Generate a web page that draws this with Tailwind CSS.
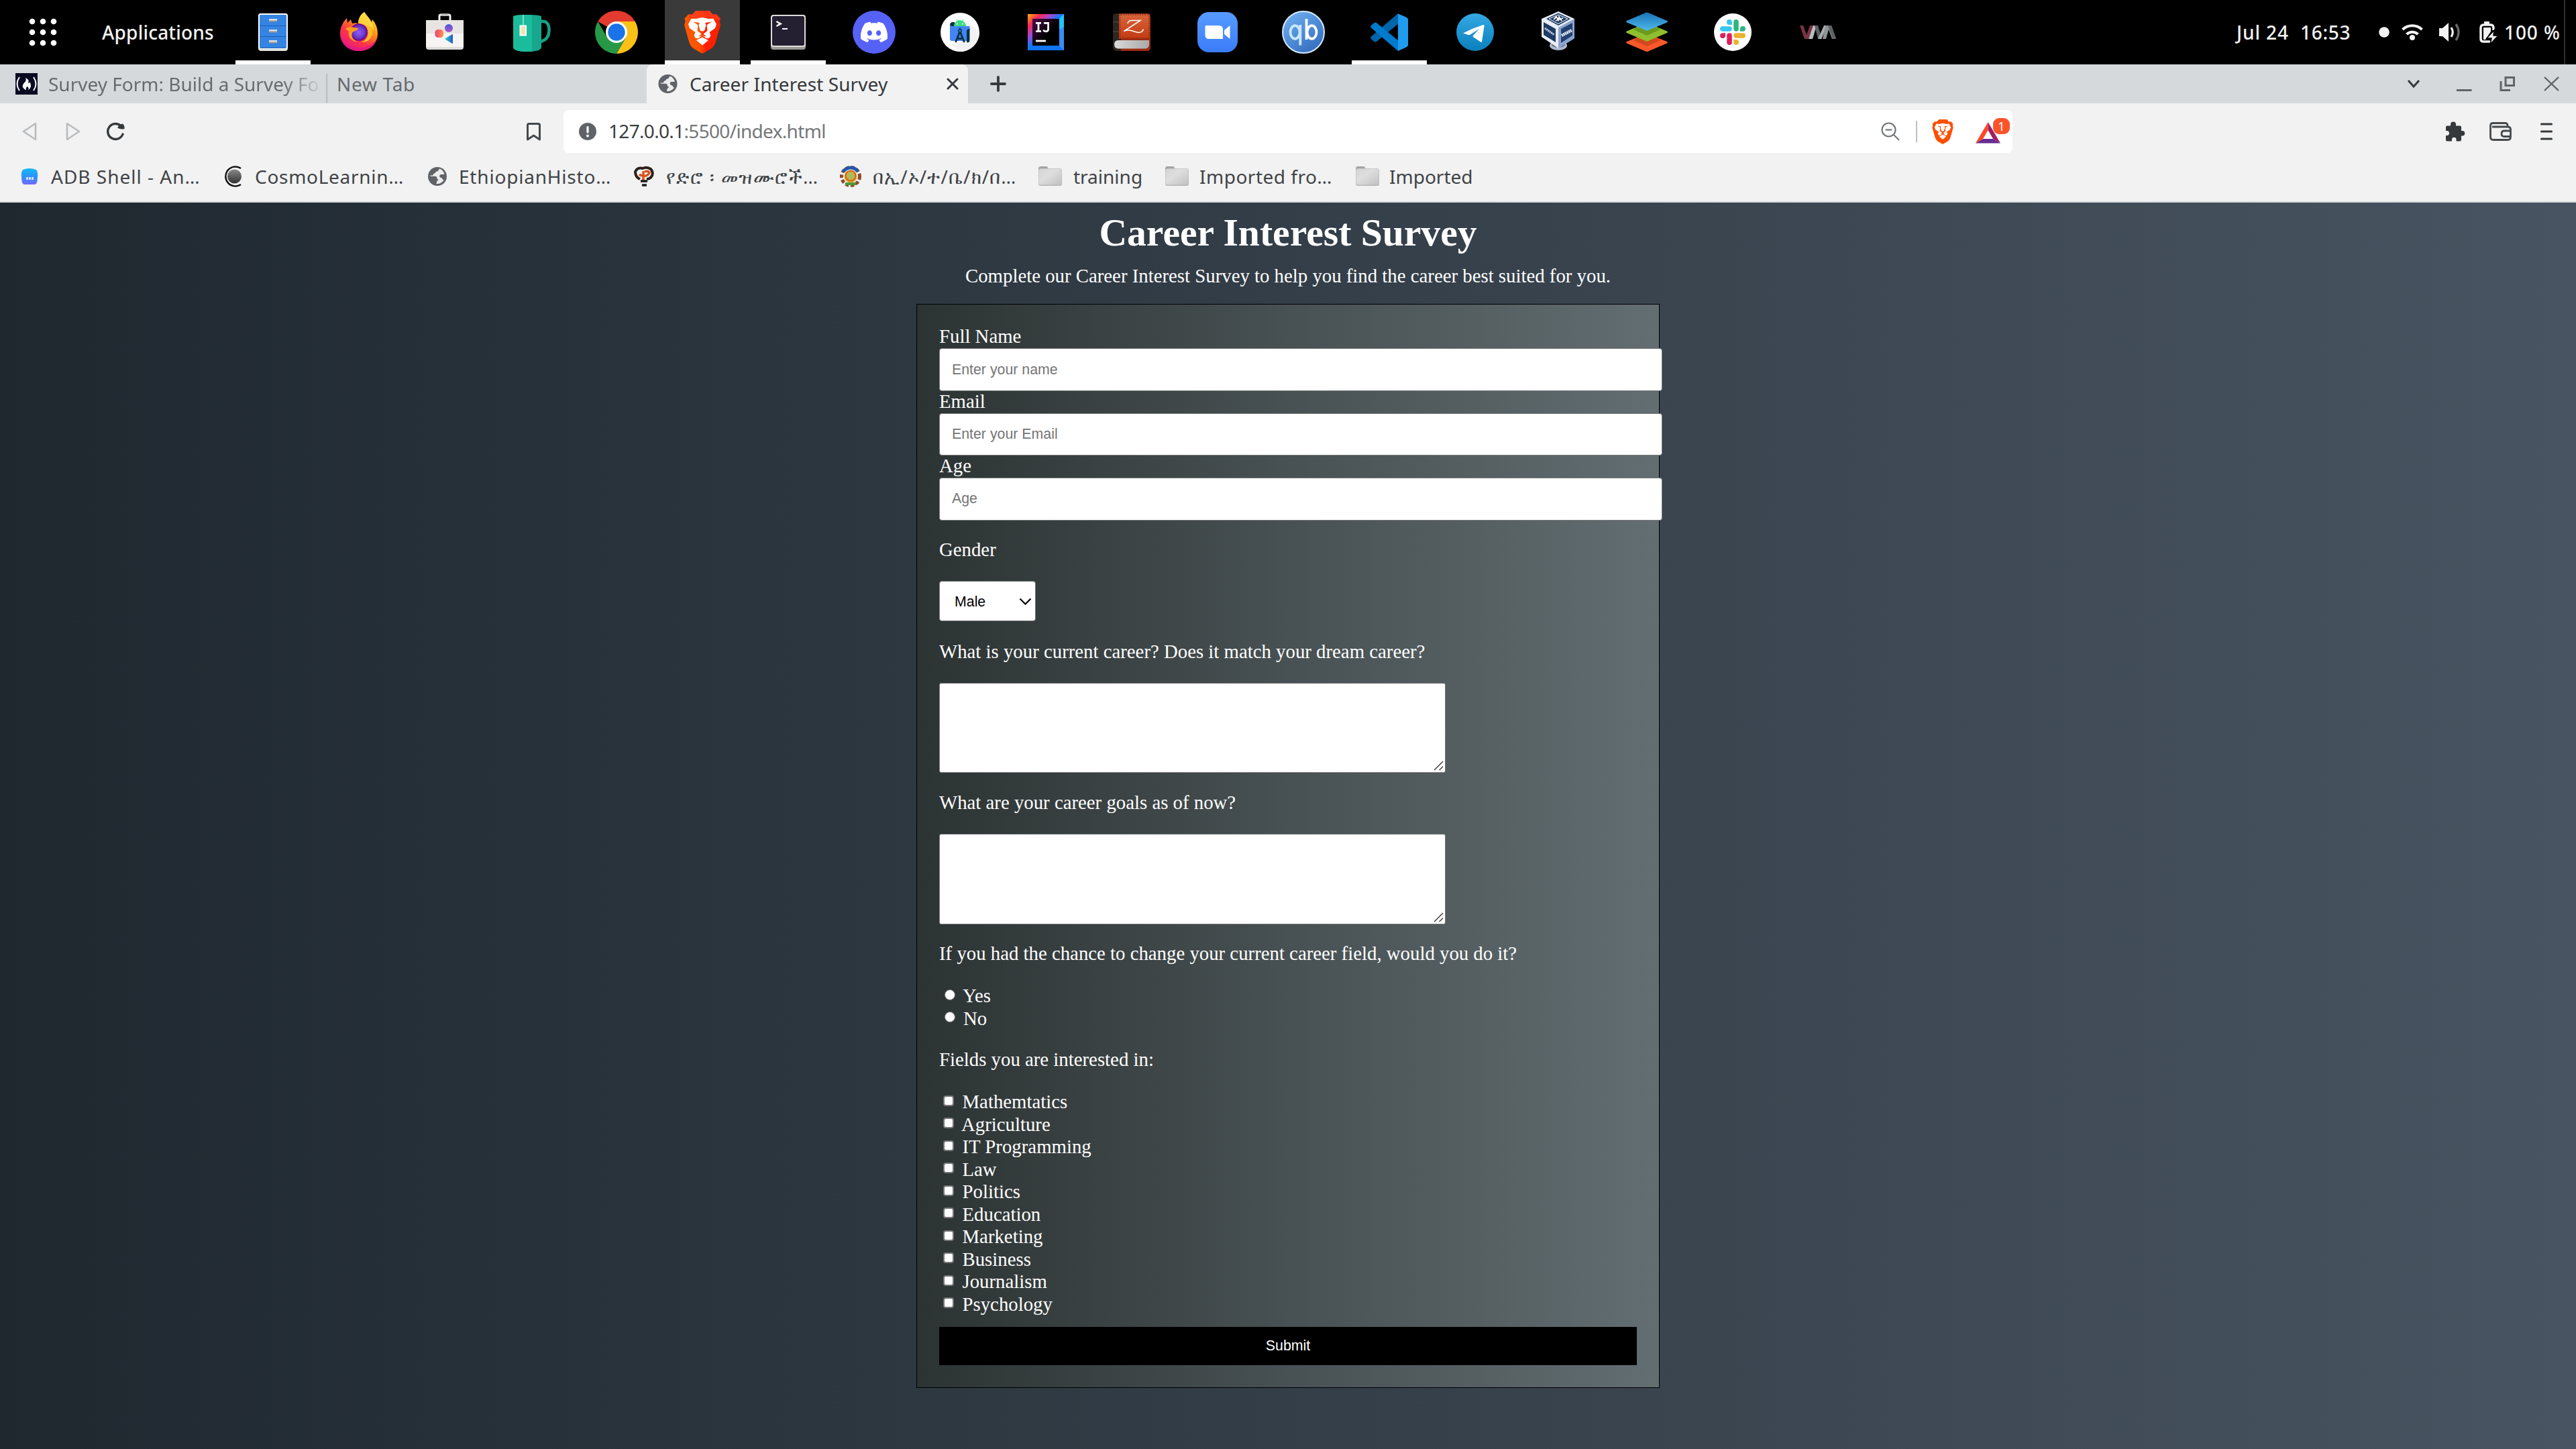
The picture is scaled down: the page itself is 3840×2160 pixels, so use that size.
<!DOCTYPE html>
<html lang="en">
<head>
<meta charset="utf-8">
<title>Career Interest Survey</title>
<script src="https://cdn.jsdelivr.net/npm/@tailwindcss/browser@4"></script>
</head>
<body class="w-[3840px] h-[2160px] overflow-hidden flex flex-col font-['Noto_Sans',sans-serif] text-[28px] leading-[38px] bg-[#f2f2f2]">

<!-- shared gradients -->
<svg class="absolute size-0">
  <defs>
    <linearGradient id="braveG" x1="0" x2="1"><stop offset="0" stop-color="#ff5500"/><stop offset=".4" stop-color="#ff5500"/><stop offset=".6" stop-color="#ff2000"/><stop offset="1" stop-color="#ff2000"/></linearGradient>
    <linearGradient id="ffG" x1=".9" y1="0" x2=".2" y2="1"><stop offset="0" stop-color="#fff44f"/><stop offset=".35" stop-color="#ff980e"/><stop offset=".65" stop-color="#ff3647"/><stop offset="1" stop-color="#e31587"/></linearGradient>
    <radialGradient id="ffP"><stop offset="0" stop-color="#9059ff"/><stop offset=".6" stop-color="#6b3fc9"/><stop offset="1" stop-color="#6e008b"/></radialGradient>
    <linearGradient id="ijG" x1="0" y1="0" x2="1" y2="1"><stop offset="0" stop-color="#fdb60d"/><stop offset=".18" stop-color="#fe2857"/><stop offset=".34" stop-color="#9a4bd8"/><stop offset=".48" stop-color="#087cfa"/><stop offset=".8" stop-color="#18a0fb"/><stop offset="1" stop-color="#8a5cf6"/></linearGradient>
    <linearGradient id="ijI" x1="0" y1="0" x2="1" y2="1"><stop offset="0" stop-color="#4a0a4a"/><stop offset=".6" stop-color="#000"/></linearGradient>
    <linearGradient id="zG" x1="0" y1="0" x2="0" y2="1"><stop offset="0" stop-color="#d9653b"/><stop offset="1" stop-color="#c23a12"/></linearGradient>
    <linearGradient id="pgG" x1="0" x2="1"><stop offset="0" stop-color="#d9d9d9"/><stop offset="1" stop-color="#a9a9a9"/></linearGradient>
    <linearGradient id="zmG" x1="0" y1="0" x2="0" y2="1"><stop offset="0" stop-color="#569bff"/><stop offset="1" stop-color="#3b7cf8"/></linearGradient>
    <linearGradient id="qbG" x1="0" y1="0" x2=".7" y2="1"><stop offset="0" stop-color="#72b4f5"/><stop offset="1" stop-color="#356ebf"/></linearGradient>
    <linearGradient id="tgG" x1="0" y1="0" x2="0" y2="1"><stop offset="0" stop-color="#34a9e4"/><stop offset="1" stop-color="#0a7fbb"/></linearGradient>
    <linearGradient id="sB" x1="0" y1="0" x2="0" y2="1"><stop offset="0" stop-color="#1a73b8"/><stop offset="1" stop-color="#4eb8ea"/></linearGradient>
    <linearGradient id="adbG" x1="0" y1="0" x2="0" y2="1"><stop offset="0" stop-color="#17b9f5"/><stop offset=".5" stop-color="#2a94fb"/><stop offset="1" stop-color="#7468fb"/></linearGradient>
    <linearGradient id="cosG" x1="0" y1="0" x2="0" y2="1"><stop offset="0" stop-color="#888"/><stop offset="1" stop-color="#333"/></linearGradient>
    <linearGradient id="foG" x1="0" y1="0" x2="1" y2="1"><stop offset="0" stop-color="#d4d4d4"/><stop offset=".4" stop-color="#dedede"/><stop offset="1" stop-color="#c2c2c2"/></linearGradient>
    <g id="lion">
      <path d="M22.3 0H42.7L47.3 5.5L53.3 5.5L59 12.3L57.3 15L59 21.3L52 46Q50 53 45 56.5L32 64L19 56.5Q14 53 12 46L5 21.3L6.700 15L5 12.300L11 5.500L17 5.500Z"/>
      <path fill="#fff" d="M32 10L42 12L48 11L53 20L51 26L42.500 32L44.500 37L42 41L37.500 41L32 36.500L26.500 41L22 41L19.500 37L21.500 32L13 26L11 20L16 11L22 12Z"/>
      <path fill="#fff" d="M32 39.500L41 44L32 51.500L23 44Z"/>
      <path d="M18 16.500L28 18L26.500 21L28.500 29L32 31L35.500 29L37.500 21L36 18L46 16.500L39.500 20.500L38.500 22L39.500 30L33.500 34.500L38 38.500L32 37L26 38.500L30.500 34.500L24.500 30L25.500 22L24.500 20.500Z"/>
    </g>
    <g id="globe">
      <circle cx="14" cy="14" r="14" fill="#5f6368"/>
      <path fill="#f2f2f2" d="M17.500 2.500C15.500 3.500 16 6 13.500 6.500C10.500 7 12 9 9.500 9.500C7.500 10 8.500 12 6.500 12.500L3 12.500C3 15 9 13 12 14C14.500 15 12 17 14.500 18C17 19 14 20 13 22L12.500 25C17 25.500 21.500 23 23.500 19.500C21 19 22 16.500 19.500 16C17 15.500 16.500 13 18 11.500C20 10.500 22 11.500 24.500 10.500C23.500 7 21 3.800 17.500 2.500Z" opacity=".95"/>
    </g>
    <g id="folder">
      <path d="M0 4Q0 0 3 0H11Q14 0 14.500 4L15 10H0Z" fill="#a3a3a3"/>
      <rect y="3" width="35" height="26" rx="3.500" fill="#b5b5b5"/>
      <rect x=".5" y="3.500" width="34" height="24" rx="3" fill="url(#foG)"/>
    </g>
  </defs>
</svg>

<!-- desktop panel -->
<div class="h-[96px] shrink-0 bg-black flex items-stretch text-[#f2f2f2] font-medium">
  <div class="w-[151px] pl-[42px] flex items-center">
    <svg width="44" height="44" viewBox="0 0 44 44" fill="#fff"><circle cx="6" cy="6" r="4.300"/><circle cx="22" cy="6" r="4.300"/><circle cx="38" cy="6" r="4.300"/><circle cx="6" cy="22" r="4.300"/><circle cx="22" cy="22" r="4.300"/><circle cx="38" cy="22" r="4.300"/><circle cx="6" cy="38" r="4.300"/><circle cx="22" cy="38" r="4.300"/><circle cx="38" cy="38" r="4.300"/></svg>
  </div>
  <div class="w-[200px] pl-[1px] flex items-center tracking-[0.2px]">Applications</div>

  <div class="flex gap-[16px]">
    <div class="w-[112px] flex items-center justify-center border-b-[6px] border-white pt-[6px]">
      <svg width="64" height="64" viewBox="0 0 64 64"><rect x="10" y="4" width="44" height="56" rx="4" fill="#deddda"/><rect x="10" y="4" width="44" height="53" rx="4" fill="#fff"/><rect x="12" y="6" width="40" height="50" rx="2" fill="#1a5fb4"/><path d="M14 6H50Q52 6 52 8V22H12V8Q12 6 14 6ZM12 23H52V38H12ZM12 39H52V55H12Z" fill="#3584e4"/><g fill="#9a9996"><rect x="26" y="12" width="12" height="4.500"/><rect x="26" y="28" width="12" height="4.500"/><rect x="26" y="44" width="12" height="4.500"/></g><g fill="#deddda"><rect x="26" y="12" width="12" height="2.500"/><rect x="26" y="28" width="12" height="2.500"/><rect x="26" y="44" width="12" height="2.500"/></g></svg>
    </div>
    <div class="w-[112px] flex items-center justify-center">
      <svg width="64" height="64" viewBox="0 0 64 64"><path fill="url(#ffG)" d="M40 2C44 8 48 11 51 17L52 13Q60 22 60 34C60 49 48 60 32 60C16 60 4 49 4 34C4 25 8 17 14 11L15 18L20 13L22 19C25 18 29 18 31 19C31 12 34 6 40 2Z"/><path fill="#e31587" opacity=".75" d="M5 39C9 51 20 55 32 55C44 55 55 50 59 40C57 53 46 60 32 60C18 60 7 52 5 39Z"/><circle cx="32" cy="32" r="13" fill="url(#ffP)"/><path fill="#ff9a1f" d="M12 27C16 22 24 25 31 26C30 31 23 30 22 33C20 39 24 44 30 46C20 46 15 38 17 31Z"/><path fill="#ffbd2e" d="M36 20C42 21 46 26 46 33C46 40 41 45 36 47C46 48 52 40 52 32C52 25 47 19 41 19Z"/><path fill="#ffe04a" d="M40 2C45 9 54 18 54 30C50 20 38 20 31 19C31 12 34 6 40 2Z" opacity=".75"/></svg>
    </div>
    <div class="w-[112px] flex items-center justify-center">
      <svg width="64" height="64" viewBox="0 0 64 64"><defs><linearGradient id="sw1"><stop offset="0" stop-color="#ed3f80"/><stop offset="1" stop-color="#ff9444"/></linearGradient><linearGradient id="sw2" x1="0" y1="0" x2="0" y2="1"><stop offset="0" stop-color="#4b57dc"/><stop offset="1" stop-color="#b154c9"/></linearGradient><linearGradient id="sw3"><stop offset="0" stop-color="#34dab8"/><stop offset="1" stop-color="#1f54d4"/></linearGradient></defs><path d="M24 15V8Q24 6 26 6H38Q40 6 40 8V15" fill="none" stroke="#f6f5f4" stroke-width="3"/><path d="M26 4.500H38L37 8H27Z" fill="#c0bfbc"/><path d="M4 14H60V54Q60 58 56 58H8Q4 58 4 54Z" fill="#deddda"/><path d="M4 14H60V54H4Z" fill="#f6f5f4"/><path d="M4 14H60V34H4Z" fill="#e6e5e1"/><circle cx="38" cy="26" r="6" fill="url(#sw2)"/><rect x="17.500" y="28" width="12.500" height="12" rx="4.500" fill="url(#sw1)"/><path d="M44 36Q44 34.500 42.500 35.500L33 41Q31.500 42 33 43L42.500 48.500Q44 49.500 44 48Z" fill="url(#sw3)"/></svg>
    </div>
    <div class="w-[112px] flex items-center justify-center">
      <svg width="64" height="64" viewBox="0 0 64 64"><path d="M47 16Q60 14 59.500 30Q59 43 47 46" fill="none" stroke="#16a085" stroke-width="4.500"/><path d="M6 9Q6 6 27 6Q48 6 48 9V54Q48 61 27 61Q6 61 6 54Z" fill="#16a78c"/><path d="M6 9Q6 6 27 6L34 6.200V61Q6 62 6 54Z" fill="#1abc9c"/><path d="M21 6V22" stroke="#a8e6da" stroke-width="1.500"/><rect x="15.500" y="21.500" width="10.500" height="16" fill="#fff"/><rect x="17.500" y="23.500" width="6.500" height="12" fill="#ece5b0"/></svg>
    </div>
    <div class="w-[112px] flex items-center justify-center">
      <svg width="64" height="64" viewBox="0 0 64 64"><path d="M32 32L4.290 16A32 32 0 0 1 59.710 16Z" fill="#e33b2e"/><path d="M32 16H59.710A32 32 0 0 1 32 64L45.860 40Z" fill="#fbc116"/><path d="M18.140 40L4.290 16A32 32 0 0 0 32 64L45.860 40Z" fill="#279847"/><path d="M32 16H59.710L45 40Z" fill="#fbc116"/><circle cx="32" cy="32" r="16" fill="#fff"/><circle cx="32" cy="32" r="12.700" fill="#1a73e8"/></svg>
    </div>
    <div class="w-[112px] flex items-center justify-center bg-[#3a3a3a] border-b-[6px] border-white pt-[6px]">
      <svg width="64" height="64" viewBox="0 0 64 64" fill="url(#braveG)"><use href="#lion"/><path d="M22.300 0H42.700L47.300 5.500H53.300L59 12.300L57.300 15L50 12L42 12L32 9.500L22 12L14 12L11 5.500H17Z" fill="#ff3a1c" opacity=".8"/></svg>
    </div>
    <div class="w-[112px] flex items-center justify-center border-b-[6px] border-white pt-[6px]">
      <svg width="64" height="64" viewBox="0 0 64 64"><rect x="6" y="10" width="52" height="48" rx="4" fill="#9a9996"/><rect x="6" y="6" width="52" height="48" rx="4" fill="#deddda"/><rect x="8" y="8" width="48" height="44" rx="2.500" fill="#241f31"/><path d="M14.500 16L20.500 19.500L14.500 23" fill="none" stroke="#fff" stroke-width="2.600"/><path d="M23 27H31" stroke="#fff" stroke-width="2"/></svg>
    </div>
    <div class="w-[112px] flex items-center justify-center">
      <svg width="64" height="64" viewBox="0 0 64 64"><circle cx="32" cy="32" r="32" fill="#5662f6"/><path fill="#fff" transform="translate(12 11.800) scale(1.667)" d="M20.317 4.3698a19.7913 19.7913 0 00-4.8851-1.5152.0741.0741 0 00-.0785.0371c-.211.3753-.4447.8648-.6083 1.2495-1.8447-.2762-3.68-.2762-5.4868 0-.1636-.3933-.4058-.8742-.6177-1.2495a.077.077 0 00-.0785-.037 19.7363 19.7363 0 00-4.8852 1.515.0699.0699 0 00-.0321.0277C.5334 9.0458-.319 13.5799.0992 18.0578a.0824.0824 0 00.0312.0561c2.0528 1.5076 4.0413 2.4228 5.9929 3.0294a.0777.0777 0 00.0842-.0276c.4616-.6304.8731-1.2952 1.226-1.9942a.076.076 0 00-.0416-.1057c-.6528-.2476-1.2743-.5495-1.8722-.8923a.077.077 0 01-.0076-.1277c.1258-.0943.2517-.1923.3718-.2914a.0743.0743 0 01.0776-.0105c3.9278 1.7933 8.18 1.7933 12.0614 0a.0739.0739 0 01.0785.0095c.1202.099.246.1981.3728.2924a.077.077 0 01-.0066.1276 12.2986 12.2986 0 01-1.873.8914.0766.0766 0 00-.0407.1067c.3604.698.7719 1.3628 1.225 1.9932a.076.076 0 00.0842.0286c1.961-.6067 3.9495-1.5219 6.0023-3.0294a.077.077 0 00.0313-.0552c.5004-5.177-.8382-9.6739-3.5485-13.6604a.061.061 0 00-.0312-.0286zM8.02 15.3312c-1.1825 0-2.1569-1.0857-2.1569-2.419 0-1.3332.9555-2.4189 2.157-2.4189 1.2108 0 2.1757 1.0952 2.1568 2.419 0 1.3332-.9555 2.4189-2.1569 2.4189zm7.9748 0c-1.1825 0-2.1569-1.0857-2.1569-2.419 0-1.3332.9554-2.4189 2.1569-2.4189 1.2108 0 2.1757 1.0952 2.1568 2.419 0 1.3332-.946 2.4189-2.1568 2.4189Z"/></svg>
    </div>
    <div class="w-[112px] flex items-center justify-center">
      <svg width="64" height="64" viewBox="0 0 64 64"><circle cx="32" cy="32" r="29" fill="#fff"/><path d="M40 14L61 32A29 29 0 0 1 30 61L20 50L42 45Z" fill="#f3f3f3"/><path d="M17 22Q17 17 21 17H24V24H17Z" fill="#073042"/><path d="M17 21Q18 23 21 23H44V43Q44 45 41 45H20Q17 45 17 42Z" fill="#4285f4"/><path d="M23 23A9 9 0 0 1 41 23Z" fill="#3ddc84"/><path d="M27 13L29 16.500M37 13L35 16.500" stroke="#3ddc84" stroke-width="1"/><g fill="#fff"><circle cx="28" cy="19.500" r="1"/><circle cx="36" cy="19.500" r="1"/></g><path d="M42 23H46.500V30H42Z" fill="#4285f4"/><path d="M42 30Q42 28 44 27.500L46.500 26.500V44Q46.500 47 43.500 47.500Q42 47.500 42 45Z" fill="#073042"/><path d="M31.500 32L25.500 47M32.500 32L38.500 47M28 40.500Q32 43 36 40.500" stroke="#073042" stroke-width="2.800" fill="none"/><circle cx="32" cy="30" r="2.200" fill="#4285f4" stroke="#073042" stroke-width="1.500"/><path d="M32 25V28" stroke="#073042" stroke-width="1.500"/></svg>
    </div>
    <div class="w-[112px] flex items-center justify-center">
      <svg width="64" height="64" viewBox="0 0 64 64"><rect x="5" y="5" width="54" height="54" fill="url(#ijG)"/><path d="M5 59L12 52H52L59 59Z" fill="#1173f0"/><path d="M59 5L52 12V52L59 59Z" fill="#3a8df5"/><path d="M59 5L52 12V28L59 24Z" fill="#20c5ff"/><rect x="12" y="12" width="40" height="40" fill="url(#ijI)"/><g fill="none" stroke="#fff" stroke-width="2.800"><path d="M17 18.300H25M21 18V31M17 30.700H25"/><path d="M29 18.300H35.600V27.500Q35.600 30.800 32 30.800Q30 30.800 28 29"/></g><path d="M17 45H32" stroke="#fff" stroke-width="2.800"/></svg>
    </div>
    <div class="w-[112px] flex items-center justify-center">
      <svg width="64" height="64" viewBox="0 0 64 64"><path d="M10 4H55Q60 4 60 9V55Q60 60 55 60H11Q4 60 4 53V10Q4 4 10 4Z" fill="#9c2a12"/><path d="M9 4H16V60H11Q4 60 4 53V10Q4 4 9 4Z" fill="#2b2722"/><path d="M4 17H13M4 31H13" stroke="#5a5148" stroke-width="1"/><path d="M12 44H58V49Q58 56 53 56.500H12Q6 56 6 50Q6 44.500 12 44Z" fill="url(#pgG)"/><path d="M13 5H55Q59 5 59 9V37Q59 41.500 55 42H13Z" fill="url(#zG)"/><path d="M14.500 6V41M14.500 41H55Q58 40 58 37V9Q58 6 54 6H14.500" stroke="#5a1c08" stroke-width="1" stroke-dasharray="2 1.500" fill="none"/><path d="M26 19Q27 14.500 32 14.500H45L20.500 30.500Q27 27.500 36 31Q47 35 49.500 27.500" stroke="#fff" stroke-width="1.500" fill="none"/></svg>
    </div>
    <div class="w-[112px] flex items-center justify-center">
      <svg width="64" height="64" viewBox="0 0 64 64"><rect x="2" y="2" width="60" height="60" rx="17" fill="url(#zmG)"/><path d="M15 22H34Q40 22 40 28V42H19Q13.500 42 13.500 36V24Q13.500 22 15 22Z" fill="#fff"/><path d="M42 29L50.500 22V42L42 35Z" fill="#fff"/></svg>
    </div>
    <div class="w-[112px] flex items-center justify-center">
      <svg width="64" height="64" viewBox="0 0 64 64"><circle cx="32" cy="32" r="31" fill="url(#qbG)" stroke="#daeaff" stroke-width="2"/><g fill="none" stroke-width="3.800"><g stroke="#c8e8ff"><ellipse cx="19.500" cy="32" rx="7" ry="9.800"/><path d="M27.300 21V51.500"/></g><g stroke="#fff"><ellipse cx="44.500" cy="32" rx="7" ry="9.800"/><path d="M36.500 12V43"/></g></g></svg>
    </div>
    <div class="w-[112px] flex items-center justify-center border-b-[6px] border-white pt-[6px]">
      <svg width="64" height="64" viewBox="0 0 64 64"><path d="M45 4L46 19L13 46Q11 47 9.500 46L4.500 41.500Q3.500 40 5 38.500Z" fill="#0065a9"/><path d="M45 60L46 45L13 18Q11 17 9.500 18L4.500 22.500Q3.500 24 5 25.500Z" fill="#007acc"/><path d="M45 4.500L57 9.500Q60 11 60 13V51Q60 53 57 54.500L45 60Z" fill="#1f9cf0"/></svg>
    </div>
    <div class="w-[112px] flex items-center justify-center">
      <svg width="64" height="64" viewBox="0 0 64 64"><circle cx="32" cy="32" r="28" fill="url(#tgG)"/><path d="M14 33.500Q28 26 44 21Q46 20.500 45.500 23L42 46Q41.500 47.500 40 46.500L29 39Q28 38 29 37L38 27L24 36Q22 36.500 14 33.500Z" fill="#fff"/></svg>
    </div>
    <div class="w-[112px] flex items-center justify-center">
      <svg width="64" height="64" viewBox="0 0 64 64"><ellipse cx="28" cy="52" rx="13" ry="7" fill="#aeb8cf"/><ellipse cx="28" cy="50" rx="10" ry="5" fill="#59657f"/><path d="M28 1L52 12V41L28 56L3 39V12Z" fill="#e9edf6"/><path d="M28 25L52 12V41L28 56Z" fill="#8ba4d0"/><path d="M28 3.500L46 12L28 22L10 12Z" fill="#1d3a63"/><path d="M28 6L42 12L28 19.500L14 12Z" fill="none" stroke="#fff" stroke-width="1"/><path d="M21 13L25 9L28 14L29 9L33 15M24 15L35 11" fill="none" stroke="#fff" stroke-width="1.800"/><path d="M6 17L24 27V47L6 36Z" fill="#1d3a63"/><path d="M32 27L49 18V37L32 48Z" fill="#24406f"/><path d="M8 26L22 36" stroke="#cfd8ea" stroke-width="3" stroke-dasharray="2 .8"/><path d="M33 37L48 29" stroke="#e8edf7" stroke-width="4.500" stroke-dasharray="2.200 .7"/></svg>
    </div>
    <div class="w-[112px] flex items-center justify-center">
      <svg width="64" height="64" viewBox="0 0 64 64"><path d="M32 34L62 46Q64 47.500 62 48.500L34 60.500Q32 61.500 30 60.500L2 48.500Q0 47.500 2 46Z" fill="#f9582a"/><path d="M16 40.500L48 40.500L52 44L32 53L12 44Z" fill="#d14a1c"/><path d="M32 18L62 30.500Q64 32 62 33L34 45Q32 46 30 45L2 33Q0 32 2 30.500Z" fill="#8fbf2e"/><path d="M16 25L48 25L52 28L32 37L12 28Z" fill="#6c9a1c"/><path d="M30 3Q32 2 34 3L62 15Q64 16 62 17.500L34 29Q32 30 30 29L2 17.500Q0 16 2 15Z" fill="url(#sB)"/></svg>
    </div>
    <div class="w-[112px] flex items-center justify-center">
      <svg width="64" height="64" viewBox="0 0 64 64"><circle cx="32" cy="32" r="28" fill="#fff"/><g stroke-width="7.500" stroke-linecap="round"><path d="M16.800 27H27" stroke="#36c5f0"/><path d="M37 16.800V27" stroke="#2eb67d"/><path d="M47.200 37H37" stroke="#ecb22e"/><path d="M27 47.200V37" stroke="#e01e5a"/></g><path d="M27 13A4 4 0 0 0 27 21H30.800V17A4 4 0 0 0 27 13Z" fill="#36c5f0"/><path d="M51 27A4 4 0 0 0 43 27V30.800H47A4 4 0 0 0 51 27Z" fill="#2eb67d"/><path d="M37 51A4 4 0 0 0 37 43H33.200V47A4 4 0 0 0 37 51Z" fill="#ecb22e"/><path d="M13 37A4 4 0 0 0 21 37V33.200H17A4 4 0 0 0 13 37Z" fill="#e01e5a"/></svg>
    </div>
    <div class="w-[112px] flex items-center justify-center">
      <svg width="64" height="64" viewBox="0 0 64 64"><path d="M4 22H9L14 36L19 22H25L17 42H11Z" fill="#7a3344"/><path d="M24 22H29L23 42H17Z" fill="#b9bcbe"/><path d="M26 22H31L37 42H31Z" fill="#5c6264"/><path d="M40 22H45L36 42H31Z" fill="#a9adaf"/><path d="M42 22H51L58 42H52L47 28L43 42H38Z" fill="#8e9496"/><path d="M46 22H51L58 42H53Z" fill="#5c6264"/></svg>
    </div>
  </div>

  <div class="flex-1"></div>
  <div class="w-[488px] shrink-0 flex items-center whitespace-pre">
    <span class="w-[95px] shrink-0 tracking-[0.9px]">Jul 24</span>
    <span class="w-[110px] shrink-0 tracking-[0.7px]">16:53</span>
    <svg class="shrink-0" width="188" height="40" viewBox="0 0 188 40" fill="#f2f2f2">
      <circle cx="15" cy="20" r="7.800"/>
      <g fill="none" stroke="#f2f2f2" stroke-width="4"><path d="M42.500 16A21 21 0 0 1 71.500 16"/><path d="M48.500 23A12.500 12.500 0 0 1 65.500 23"/></g><circle cx="57" cy="28" r="4"/>
      <path d="M97 14H102L111 6V34L102 26H97Z"/><path d="M115 13Q119.500 20 115 27" fill="none" stroke="#f2f2f2" stroke-width="3.200"/><path d="M122 8Q130 20 122 32" fill="none" stroke="#6a6a6a" stroke-width="3.200"/>
      <path d="M164 4H172V8H164Z"/><path d="M173 34H163Q159 34 159 30V14Q159 9 163 9H174Q178 9 178 14V17" fill="none" stroke="#f2f2f2" stroke-width="3.500"/><path d="M163 13H174V19L166 31H163Z"/><path d="M179 17L168 29H175L173 38L185 25H178Z" stroke="#000" stroke-width="1.500"/>
    </svg>
    <span class="pl-[6px] flex-1 tracking-[0.9px]">100 %</span>
  </div>
  <div class="w-[2px] mr-[16px] bg-[#2c2c2c] shrink-0"></div>
</div>

<!-- tab strip -->
<div class="h-[58px] shrink-0 bg-[#d5d9dc] flex items-center text-[#666a6d]">
  <div class="w-[488px] h-[58px] pl-[23px] flex items-center shrink-0">
    <svg class="shrink-0" width="33" height="32" viewBox="0 0 33 32"><rect width="33" height="32" fill="#0a0a23"/><path d="M6 6Q-1 16 6 26M27 6Q34 16 27 26" fill="none" stroke="#fff" stroke-width="2"/><path d="M15 7Q22 10 18.500 15Q22 15 21 12.500Q26 20 19 25.500Q21 22 17.500 20Q15 22 16 25.500Q7 21 13.500 14Q17 11 15 7Z" fill="#fff"/></svg>
    <span class="ml-[16px] w-[407px] whitespace-nowrap bg-[linear-gradient(to_right,#666a6d_86%,transparent_101%)] bg-clip-text text-transparent">Survey Form: Build a Survey Fo</span>
    <span class="ml-[7px] mt-[14px] w-[2px] h-[44px] bg-[#b9bcbe]"></span>
  </div>
  <div class="w-[476px] pl-[14px] tracking-[0.7px] shrink-0">New Tab</div>
  <div class="w-[479px] h-[58px] bg-[#f2f2f2] rounded-t-[9px] flex items-center shrink-0 text-[#35393c]">
    <svg class="ml-[17px] shrink-0" width="29" height="28" viewBox="0 0 28 28"><use href="#globe"/></svg>
    <span class="ml-[18px] w-[383px] tracking-[0.1px]">Career Interest Survey</span>
    <svg width="18" height="18" viewBox="0 0 18 18" fill="none" stroke="#35393c" stroke-width="3" stroke-linecap="round"><path d="M2 2L16 16M16 2L2 16"/></svg>
  </div>
  <svg class="ml-[33px]" width="24" height="24" viewBox="0 0 24 24" stroke="#35393c" stroke-width="3.800" stroke-linecap="round"><path d="M12 2V22M2 12H22"/></svg>
  <div class="flex-1"></div>
  <svg width="20" height="14" viewBox="0 0 20 14" fill="none" stroke="#35393c" stroke-width="3"><path d="M2 2L10 11L18 2"/></svg>
  <svg class="ml-[54px]" width="23" height="24" viewBox="0 0 23 24"><path d="M0 21.500H22.500" stroke="#5f6467" stroke-width="3"/></svg>
  <svg class="ml-[41px]" width="24" height="24" viewBox="0 0 24 24" fill="none" stroke="#5f6467"><rect x="9" y="2.500" width="12.500" height="12" stroke-width="3"/><path d="M2 8V21.500H16" stroke-width="3"/></svg>
  <svg class="ml-[42px] mr-[25px]" width="23" height="22" viewBox="0 0 23 22" stroke="#5f6467" stroke-width="2.400"><path d="M1 1L22 21M22 1L1 21"/></svg>
</div>

<!-- address bar -->
<div class="h-[84px] shrink-0 flex items-center">
  <svg class="ml-[33px]" width="22" height="28" viewBox="0 0 22 28" fill="none" stroke="#b9bcbe" stroke-width="2.600" stroke-linejoin="round"><path d="M20 2V26L2 14Z"/></svg>
  <svg class="ml-[43px]" width="22" height="28" viewBox="0 0 22 28" fill="none" stroke="#b9bcbe" stroke-width="2.600" stroke-linejoin="round"><path d="M2 2V26L20 14Z"/></svg>
  <svg class="ml-[38px]" width="30" height="28" viewBox="0 0 30 28"><path d="M22.500 6A11.500 11.500 0 1 0 25 18" fill="none" stroke="#35393c" stroke-width="3.400" stroke-linecap="round"/><path d="M17 8.500Q20 3 25 2.500Q28 5 27.500 10Q22 11.500 17 8.500Z" fill="#35393c"/></svg>
  <svg class="ml-[597px]" width="21" height="27" viewBox="0 0 21 27" fill="none" stroke="#45494c" stroke-width="3" stroke-linejoin="round"><path d="M1.500 25V3.500Q1.500 1.500 3.500 1.500H17.500Q19.500 1.500 19.500 3.500V25L10.500 19Z"/></svg>
  <div class="ml-[34px] w-[2160px] h-[64px] bg-white rounded-[8px] flex items-center shrink-0">
    <svg class="ml-[23px] shrink-0" width="26" height="26" viewBox="0 0 26 26"><circle cx="13" cy="13" r="13" fill="#5f6368"/><path d="M13 6.500V14" stroke="#fff" stroke-width="3.200" stroke-linecap="round"/><circle cx="13" cy="19.500" r="1.900" fill="#fff"/></svg>
    <span class="ml-[18px] w-[1897px] -mt-[2px] tracking-[-0.68px] text-[#74777a]"><span class="text-[#3a3e41]">127.0.0.1</span>:5500/index.html</span>
    <svg class="shrink-0" width="28" height="28" viewBox="0 0 28 28" fill="none" stroke="#74777a" stroke-width="2.200"><circle cx="11.500" cy="11.500" r="10"/><path d="M19 19L27 27"/><path d="M6.500 11.500H16.500"/></svg>
    <span class="ml-[24px] w-[2px] h-[32px] bg-[#bdbfc1] shrink-0"></span>
    <svg class="ml-[22px] shrink-0" width="32" height="37" viewBox="5 0 54 64" fill="#fb5000"><use href="#lion"/></svg>
    <div class="relative ml-[33px] w-[50px] h-[40px] shrink-0">
      <svg class="mt-[6px]" width="37" height="32" viewBox="0 0 37 32"><path d="M18.500 0L0 31.500L11 25L18.500 12Z" fill="#ff4724"/><path d="M18.500 0L37 31.500L26 25L18.500 12Z" fill="#9e1f63"/><path d="M0 31.500H37L26 25H11Z" fill="#662d91"/></svg>
      <span class="absolute left-[26px] top-[0px] w-[25px] h-[24px] rounded-[9px] bg-[#fb542b] text-white text-[18px] leading-[24px] text-center">1</span>
    </div>
  </div>
  <div class="flex-1"></div>
  <svg width="30" height="30" viewBox="0 0 30 30" fill="#35393c"><path d="M2 6.500H8V4.500A3.700 3.700 0 0 1 16 4.500V6.500H22Q24 6.500 24 8.500V14H25.500A3.600 3.600 0 0 1 25.500 21.500H24V27.500Q24 29.500 22 29.500H16.500V27A3.200 3.200 0 0 0 10 27V29.500H3Q1 29.500 1 27.500V21H2.500A3.400 3.400 0 0 0 2.500 14H1V8.500Q1 6.500 3 6.500Z"/></svg>
  <svg class="ml-[36px]" width="33" height="28" viewBox="0 0 33 28" fill="none" stroke="#45494c" stroke-width="2.800"><path d="M27 8V5Q27 1.500 23.500 1.500H5Q1.500 1.500 1.500 5V22Q1.500 26.500 6 26.500H27Q31.500 26.500 31.500 22V11Q31.500 7.500 28 7H4"/><path d="M31 13H22Q18 13 18 17.500Q18 21.500 22 21.500H31"/></svg>
  <svg class="ml-[42px] mr-[34px]" width="20" height="28" viewBox="0 0 20 28" stroke="#35393c" stroke-width="3.200" stroke-linecap="round"><path d="M2.500 3H17.500M2.500 14H17.500M2.500 25H17.500"/></svg>
</div>

<!-- bookmarks bar -->
<div class="h-[64px] shrink-0 pl-[28px] pb-[12px] flex items-center whitespace-nowrap text-[#3f4346] border-b-[2px] border-[#d5d9dc]">
  <div class="w-[304px] flex items-center gap-[16px] tracking-[1px]"><svg width="32" height="32" viewBox="0 0 32 32"><path d="M6 6Q16 2 26 6Q29 10 28 16Q28 28 24 28H8Q4 28 4 16Q3 10 6 6Z" fill="url(#adbG)"/><path d="M11 19H22" stroke="#cfe4ff" stroke-width="4" stroke-dasharray="3 1"/></svg>ADB Shell - An…</div>
  <div class="w-[304px] flex items-center gap-[16px] tracking-[0.7px]"><svg width="32" height="32" viewBox="0 0 32 32"><path d="M27 4A14.500 14.500 0 1 0 27 28" fill="none" stroke="#111" stroke-width="2.500"/><circle cx="17.500" cy="16" r="10.500" fill="url(#cosG)"/></svg>CosmoLearnin…</div>
  <div class="w-[308px] flex items-center gap-[16px] tracking-[0.8px]"><svg width="32" height="32" viewBox="-2 -2 32 32"><use href="#globe"/></svg>EthiopianHisto…</div>
  <div class="w-[308px] flex items-center gap-[17px] tracking-[1.4px]"><svg width="32" height="32" viewBox="0 0 32 32"><path d="M10 20Q3 17 3 9Q6 2 14 4Q20 1 26 5Q30 9 28 15Q25 20 20 20" fill="none" stroke="#2b211c" stroke-width="4"/><path d="M9 13Q11 15 15 15M15 8V22M15 15Q22 16 24 10Q21 7 17 9" fill="none" stroke="#d9541e" stroke-width="3.500"/><path d="M11 23H21M13 29H20" stroke="#1d1d1d" stroke-width="3.500"/></svg>የድሮ ፡ መዝሙሮች…</div>
  <div class="w-[296px] flex items-center gap-[17px] tracking-[1.1px]"><svg width="32" height="32" viewBox="0 0 32 32"><circle cx="16" cy="16" r="13.500" fill="none" stroke="#8a4a2a" stroke-width="5" stroke-dasharray="5 3"/><path d="M5 9A13 13 0 0 1 27 9" fill="none" stroke="#2557a8" stroke-width="5"/><circle cx="16" cy="16" r="9.500" fill="#e8a02c"/><circle cx="16" cy="15" r="5.500" fill="#a9bd5a"/><path d="M8 27H24" stroke="#4d9a3a" stroke-width="4"/><circle cx="16" cy="15" r="7.500" fill="none" stroke="#c75a1c" stroke-width="1.500"/></svg>በኢ/ኦ/ተ/ቤ/ክ/በ…</div>
  <div class="w-[189px] flex items-center gap-[17px]"><svg width="35" height="30" viewBox="0 0 35 30"><use href="#folder"/></svg>training</div>
  <div class="w-[284px] flex items-center gap-[16px] tracking-[0.5px]"><svg width="35" height="30" viewBox="0 0 35 30"><use href="#folder"/></svg>Imported fro…</div>
  <div class="flex items-center gap-[15px]"><svg width="35" height="30" viewBox="0 0 35 30"><use href="#folder"/></svg>Imported</div>
</div>

<!-- page -->
<main class="h-[1858px] shrink-0 flex flex-col items-center bg-[linear-gradient(to_right,#1f282f,#485461)] text-white font-['Liberation_Serif',serif] text-[28.8px]">
  <h1 class="mt-[12px] text-[57.6px] leading-[65px] font-bold">Career Interest Survey</h1>
  <p class="mt-[16px] leading-[32px]">Complete our Career Interest Survey to help you find the career best suited for you.</p>
  <form class="mt-[26px] w-[1108px] h-[1616px] border border-black bg-[linear-gradient(to_right,#2c3333,#636e72)] pt-[32px] pl-[33px] flex flex-col items-start leading-[30px]">
    <label class="h-[33px] shrink-0">Full Name</label>
    <div class="w-[1078px] h-[63.6px] shrink-0 bg-white border border-[#767676] rounded-[4px] pl-[18px] flex items-center font-['Liberation_Sans',sans-serif] text-[21.33px] text-[#757575]">Enter your name</div>
    <label class="h-[33px] shrink-0">Email</label>
    <div class="w-[1078px] h-[63.6px] shrink-0 bg-white border border-[#767676] rounded-[4px] pl-[18px] flex items-center font-['Liberation_Sans',sans-serif] text-[21.33px] text-[#757575]">Enter your Email</div>
    <label class="h-[33px] shrink-0">Age</label>
    <div class="w-[1078px] h-[63.6px] shrink-0 bg-white border border-[#767676] rounded-[4px] pl-[18px] pb-[1px] flex items-center font-['Liberation_Sans',sans-serif] text-[21.33px] text-[#757575]">Age</div>

    <p class="mt-[28.3px] h-[33px] shrink-0">Gender</p>
    <div class="mt-[29.3px] w-[144px] h-[60px] shrink-0 bg-white border border-[#767676] rounded-[4px] pl-[22px] pr-[5px] pt-[1px] flex items-center justify-between font-['Liberation_Sans',sans-serif] text-[21.33px] text-black">Male
      <svg width="19" height="12" viewBox="0 0 19 12" fill="none" stroke="#000" stroke-width="2.200"><path d="M1.500 1.500L9.500 9.500L17.500 1.500"/></svg>
    </div>

    <p class="mt-[29.5px] h-[33px] shrink-0">What is your current career? Does it match your dream career?</p>
    <div class="mt-[28.8px] w-[755px] h-[134px] shrink-0 bg-white border border-[#767676] rounded-[3px] flex items-end justify-end p-[2px]">
      <svg width="15" height="15" viewBox="0 0 15 15" stroke="#4a4a4a" stroke-width="1.600"><path d="M1 14L14 1M8.500 14L14 8.500"/></svg>
    </div>
    <p class="mt-[29px] h-[33px] shrink-0">What are your career goals as of now?</p>
    <div class="mt-[29.500px] w-[755px] h-[134.500px] shrink-0 bg-white border border-[#767676] rounded-[3px] flex items-end justify-end p-[2px]">
      <svg width="15" height="15" viewBox="0 0 15 15" stroke="#4a4a4a" stroke-width="1.600"><path d="M1 14L14 1M8.500 14L14 8.500"/></svg>
    </div>
    <p class="mt-[28.3px] h-[33px] shrink-0">If you had the chance to change your current career field, would you do it?</p>

    <div class="mt-[29.8px] pl-[8px] flex flex-col">
      <label class="h-[34px] flex gap-[11px]"><span class="mt-[6px] size-[16px] rounded-full bg-white border-[1.500px] border-[#767676]"></span>Yes</label>
      <label class="h-[33px] flex gap-[12px]"><span class="mt-[5.500px] size-[16px] rounded-full bg-white border-[1.500px] border-[#767676]"></span>No</label>
    </div>
    <p class="mt-[28.3px] h-[33px] shrink-0">Fields you are interested in:</p>
    <div class="mt-[30px] pl-[6px] flex flex-col">
      <label class="h-[33.500px] flex gap-[12.500px]"><span class="mt-[5.500px] size-[16px] rounded-[4px] bg-white border-2 border-[#767676]"></span>Mathemtatics</label>
      <label class="h-[33.500px] flex gap-[11px]"><span class="mt-[5.500px] size-[16px] rounded-[4px] bg-white border-2 border-[#767676]"></span>Agriculture</label>
      <label class="h-[33.500px] flex gap-[12.500px]"><span class="mt-[5.500px] size-[16px] rounded-[4px] bg-white border-2 border-[#767676]"></span>IT Programming</label>
      <label class="h-[33.500px] flex gap-[12.500px]"><span class="mt-[5.500px] size-[16px] rounded-[4px] bg-white border-2 border-[#767676]"></span>Law</label>
      <label class="h-[33.500px] flex gap-[12.500px]"><span class="mt-[5.500px] size-[16px] rounded-[4px] bg-white border-2 border-[#767676]"></span>Politics</label>
      <label class="h-[33.500px] flex gap-[12.500px]"><span class="mt-[5.500px] size-[16px] rounded-[4px] bg-white border-2 border-[#767676]"></span>Education</label>
      <label class="h-[33.500px] flex gap-[12.500px]"><span class="mt-[5.500px] size-[16px] rounded-[4px] bg-white border-2 border-[#767676]"></span>Marketing</label>
      <label class="h-[33.500px] flex gap-[12.500px]"><span class="mt-[5.500px] size-[16px] rounded-[4px] bg-white border-2 border-[#767676]"></span>Business</label>
      <label class="h-[33.500px] flex gap-[12.500px]"><span class="mt-[5.500px] size-[16px] rounded-[4px] bg-white border-2 border-[#767676]"></span>Journalism</label>
      <label class="h-[33.500px] flex gap-[12.500px]"><span class="mt-[5.500px] size-[16px] rounded-[4px] bg-white border-2 border-[#767676]"></span>Psychology</label>
    </div>
    <button type="button" class="mt-[15.500px] w-[1040px] h-[57px] shrink-0 bg-black text-white font-['Liberation_Sans',sans-serif] text-[21.33px]">Submit</button>
  </form>
</main>
</body>
</html>
